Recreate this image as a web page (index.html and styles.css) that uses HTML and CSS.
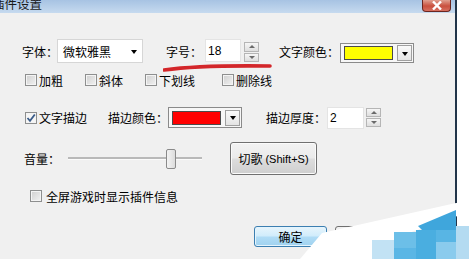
FILE: index.html
```html
<!DOCTYPE html>
<html>
<head>
<meta charset="utf-8">
<link rel="stylesheet" href="styles.css">
</head>
<body>
<div class="win">
  <div class="titlebar">
    <span class="title">插件设置</span>
    <div class="close">
      <svg width="14" height="9" viewBox="0 0 14 9"><path d="M3 0.5 L11 8.5 M11 0.5 L3 8.5" stroke="#fff" stroke-width="2.4"/></svg>
    </div>
  </div>
  <div class="body">
    <div class="row row1">
      <span class="lbl l-font">字体：</span>
      <div class="combo">
        <span class="combo-text">微软雅黑</span>
        <span class="tri"></span>
      </div>
      <span class="lbl l-size">字号：</span>
      <div class="input in-size">18</div>
      <div class="spin sp1"><span class="up"></span><span class="dn"></span></div>
      <span class="lbl l-color">文字颜色：</span>
      <div class="ccombo cc1">
        <span class="swatch yellow"></span>
        <span class="abtn"><span class="tri"></span></span>
      </div>
    </div>
    <div class="row row2">
      <label class="chk w1"><span class="box"></span>加粗</label>
      <label class="chk w2"><span class="box"></span>斜体</label>
      <label class="chk w3"><span class="box"></span>下划线</label>
      <label class="chk"><span class="box"></span>删除线</label>
    </div>
    <div class="row row3">
      <label class="chk c-stroke"><span class="box checked"><svg width="10" height="10" viewBox="0 0 10 10"><path d="M1.5 5 L4 7.8 L8.8 1.5" stroke="#3a5c8a" stroke-width="1.8" fill="none"/></svg></span>文字描边</label>
      <span class="lbl l-scolor">描边颜色：</span>
      <div class="ccombo cc2">
        <span class="swatch red"></span>
        <span class="abtn"><span class="tri"></span></span>
      </div>
      <span class="lbl l-thick">描边厚度：</span>
      <div class="input in-thick">2</div>
      <div class="spin sp2"><span class="up"></span><span class="dn"></span></div>
    </div>
    <div class="row row4">
      <span class="lbl l-vol">音量：</span>
      <div class="slider"><span class="track"></span><span class="thumb"></span></div>
      <div class="btn">切歌 <span class="latin">(Shift+S)</span></div>
    </div>
    <div class="row row5">
      <label class="chk"><span class="box"></span>全屏游戏时显示插件信息</label>
    </div>
    <div class="row footer">
      <div class="okbtn">确定</div>
      <div class="cbtn"></div>
    </div>
  </div>
</div>
<svg class="mark" width="109" height="30" viewBox="163 52 109 30"><path d="M164 70 Q 200 65 270 66" stroke="#d3262a" stroke-width="3.6" stroke-linecap="round" fill="none"/></svg>
<svg class="wm" width="189" height="64" viewBox="280 195 189 64">
  <polygon points="300,259 322,233 456,203 469,203 469,212 400,236 372,259" fill="#ffffff"/>
  <polygon points="418,226 456,210 456,232 424,232" fill="#3fa6dc"/>
  <rect x="372" y="240" width="22" height="19" fill="#c2e2f4"/>
  <rect x="394" y="232" width="22" height="27" fill="#6cbfe8"/>
  <rect x="416" y="230" width="20" height="29" fill="#4aaee0"/>
  <rect x="436" y="230" width="20" height="12" fill="#58b5e4"/>
  <rect x="436" y="242" width="20" height="17" fill="#8acbed"/>
  <rect x="456" y="226" width="13" height="33" fill="#b4dbf1"/>
  <rect x="394" y="248" width="22" height="11" fill="#5ab6e5"/>
</svg>
</body>
</html>
```
FILE: styles.css
```css
html, body {
  margin: 0;
  padding: 0;
  background: #ffffff;
}
body {
  width: 469px;
  height: 259px;
  overflow: hidden;
  position: relative;
  font-family: "Liberation Sans", "Noto Sans CJK SC", sans-serif;
  font-size: 12px;
  color: #000;
}
.win {
  width: 455px;
  height: 259px;
  border-right: 2px solid #22354a;
  background: #f0f0f0;
}
.titlebar {
  height: 13px;
  background: linear-gradient(#a7c3e3, #c6daef);
  display: flex;
  align-items: flex-end;
  overflow: hidden;
  position: relative;
}
.title {
  line-height: 16px;
  margin-left: -8px;
  font-size: 12.5px;
  color: #1a1a1a;
  flex: 1;
}
.close {
  width: 29px;
  height: 12px;
  margin-right: 4px;
  align-self: flex-start;
  box-sizing: border-box;
  border: 1px solid #6b2620;
  border-top: none;
  border-radius: 0 0 4px 4px;
  background: linear-gradient(#e0a090, #c9503e 55%, #d77060);
  display: flex;
  align-items: center;
  justify-content: center;
}
.body {
  display: flex;
  flex-direction: column;
}
.row {
  display: flex;
  align-items: center;
}
.lbl { white-space: nowrap; }
.row1 { margin-top: 26px; height: 24px; align-items: stretch; }
.row1 .lbl { align-self: center; }
.l-font { margin-left: 22px; width: 35px; }
.combo {
  width: 86px;
  box-sizing: border-box;
  border: 1px solid #d6d6d6;
  background: #fff;
  display: flex;
  align-items: center;
  padding-left: 5px;
}
.combo-text { flex: 1; }
.tri {
  width: 0; height: 0;
  border-left: 3.5px solid transparent;
  border-right: 3.5px solid transparent;
  border-top: 4px solid #000;
}
.combo .tri { margin-right: 5px; margin-top: 2px; }
.l-size { margin-left: 23px; width: 39px; }
.input {
  box-sizing: border-box;
  background: #fff;
  border: 1px solid #e4e4e4;
  padding-left: 2px;
  display: flex;
  align-items: center;
}
.in-size { width: 36px; height: 23px; align-self: flex-start; }
.spin {
  width: 15px;
  display: flex;
  flex-direction: column;
  gap: 1px;
  margin-left: 3px;
}
.spin span {
  flex: 1;
  box-sizing: border-box;
  border: 1px solid #b5b5b5;
  background: linear-gradient(#f6f6f6, #dedede);
  display: flex;
  align-items: center;
  justify-content: center;
}
.spin .up::after {
  content: "";
  border-left: 3px solid transparent;
  border-right: 3px solid transparent;
  border-bottom: 3px solid #6a6a6a;
}
.spin .dn::after {
  content: "";
  border-left: 3px solid transparent;
  border-right: 3px solid transparent;
  border-top: 3px solid #6a6a6a;
}
.sp1 { height: 20px; align-self: flex-end; margin-bottom: 1px; }
.l-color { margin-left: 20px; width: 61px; }
.ccombo {
  box-sizing: border-box;
  border: 1px solid #8a8a8a;
  background: #f7f7f7;
  display: flex;
  align-items: center;
  padding: 0 1px 0 3px;
  gap: 4px;
}
.cc1 { width: 74px; height: 20px; align-self: flex-end; }
.swatch {
  box-sizing: border-box;
  width: 50px;
  height: 14px;
  border: 1px solid #4a4a4a;
}
.yellow { background: #ffff00; }
.red { background: #ff0000; }
.abtn {
  margin-left: auto;
  width: 15px;
  height: 16px;
  box-sizing: border-box;
  border: 1px solid #a0a0a0;
  background: linear-gradient(#fafafa, #e4e4e4);
  display: flex;
  align-items: center;
  justify-content: center;
}
.abtn .tri { margin-top: 1px; }
.row2 { margin-top: 9px; height: 16px; }
.chk {
  display: flex;
  align-items: center;
  white-space: nowrap;
}
.box {
  width: 12px;
  height: 12px;
  box-sizing: border-box;
  border: 1px solid #8e8f8f;
  background: linear-gradient(135deg, #cfcfcf, #f2f2f2);
  box-shadow: inset 0 0 0 1px #f4f4f4;
  margin-right: 2px;
  display: flex;
  align-items: center;
  justify-content: center;
}
.box.checked { background: #f6f6f6; }
.row2 .chk:first-child { margin-left: 25px; }
.w1 { width: 60px; }
.w2 { width: 60px; }
.w3 { width: 77px; }
.row3 { margin-top: 19px; height: 21px; }
.c-stroke { margin-left: 25px; width: 83px; }
.l-scolor { width: 60px; }
.cc2 { width: 74px; height: 21px; }
.l-thick { margin-left: 24px; width: 61px; }
.in-thick { width: 37px; height: 22px; }
.sp2 { height: 19px; margin-left: 2px; }
.row4 { margin-top: 14px; height: 33px; }
.l-vol { margin-left: 24px; width: 44px; }
.slider {
  width: 134px;
  height: 20px;
  position: relative;
  display: flex;
  align-items: center;
}
.track {
  width: 100%;
  height: 2px;
  background: #b9b9b9;
  border-bottom: 1px solid #fbfbfb;
}
.thumb {
  position: absolute;
  left: 98px;
  top: 0;
  width: 10px;
  height: 20px;
  box-sizing: border-box;
  border: 1px solid #8a8a8a;
  border-radius: 2px;
  background: linear-gradient(90deg, #f3f3f3, #dcdcdc);
}
.btn {
  margin-left: 28px;
  width: 87px;
  height: 33px;
  box-sizing: border-box;
  border: 1px solid #707070;
  border-radius: 3px;
  background: linear-gradient(#f2f2f2, #ebebeb 48%, #dddddd 52%, #cfcfcf);
  box-shadow: inset 0 0 0 1px #fbfbfb;
  display: flex;
  align-items: center;
  justify-content: center;
  white-space: nowrap;
  gap: 3px;
}
.latin { font-size: 11px; }
.row5 { margin-top: 14px; height: 14px; }
.row5 .chk { margin-left: 30px; }
.row5 .box { margin-right: 4px; }
.footer { margin-top: 23px; height: 21px; }
.okbtn {
  margin-left: 254px;
  width: 73px;
  height: 21px;
  box-sizing: border-box;
  border: 1px solid #3c7fb1;
  border-radius: 3px;
  background: linear-gradient(#e8f5fc, #d0ecfb 48%, #b0dcf6 52%, #a0d2ef);
  box-shadow: inset 0 0 0 1px #e4f4fd;
  display: flex;
  align-items: center;
  justify-content: center;
}
.cbtn {
  margin-left: 8px;
  width: 73px;
  height: 21px;
  box-sizing: border-box;
  border: 1px solid #707070;
  border-radius: 3px;
  background: linear-gradient(#f2f2f2, #dddddd);
}
.mark {
  position: absolute;
  left: 163px;
  top: 52px;
}
.wm {
  position: absolute;
  left: 280px;
  top: 195px;
}
```
